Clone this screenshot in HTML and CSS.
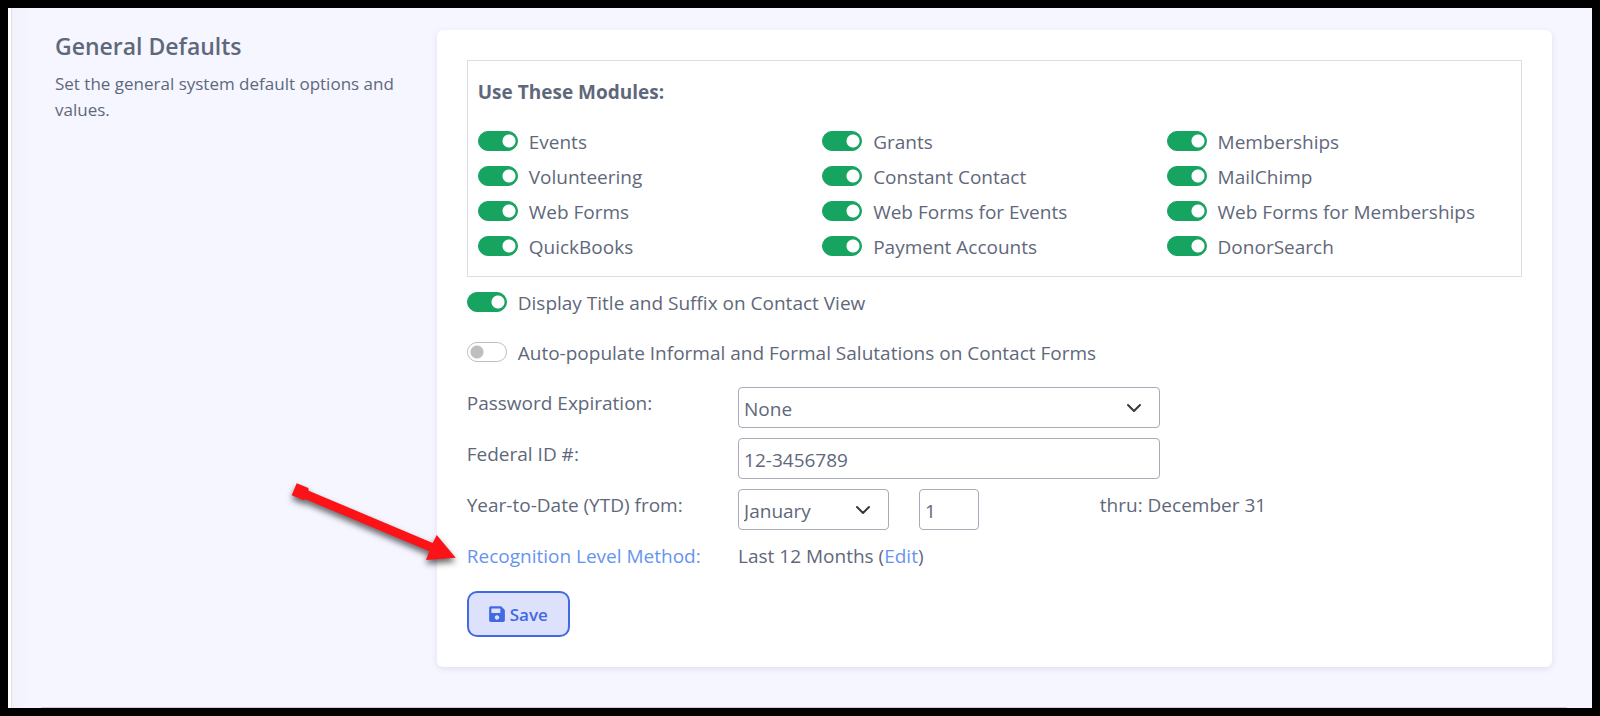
FILE: index.html
```html
<!DOCTYPE html>
<html lang="en">
<head>
  <meta charset="UTF-8">
  <meta name="viewport" content="width=device-width, initial-scale=1">
  <title>General Defaults</title>
  <link rel="stylesheet" href="styles.css">
</head>
<body>
  <main class="page">
    <div class="layout">
      <section class="intro">
        <h2>General Defaults</h2>
        <p>Set the general system default options and values.</p>
      </section>

      <form class="card">
        <fieldset class="modules">
          <h3 class="modules-title">Use These Modules:</h3>
          <div class="modules-grid">
            <label class="switch"><input type="checkbox" checked>Events</label>
            <label class="switch"><input type="checkbox" checked>Grants</label>
            <label class="switch"><input type="checkbox" checked>Memberships</label>
            <label class="switch"><input type="checkbox" checked>Volunteering</label>
            <label class="switch"><input type="checkbox" checked>Constant Contact</label>
            <label class="switch"><input type="checkbox" checked>MailChimp</label>
            <label class="switch"><input type="checkbox" checked>Web Forms</label>
            <label class="switch"><input type="checkbox" checked>Web Forms for Events</label>
            <label class="switch"><input type="checkbox" checked>Web Forms for Memberships</label>
            <label class="switch"><input type="checkbox" checked>QuickBooks</label>
            <label class="switch"><input type="checkbox" checked>Payment Accounts</label>
            <label class="switch"><input type="checkbox" checked>DonorSearch</label>
          </div>
        </fieldset>

        <div class="options">
          <label class="switch"><input type="checkbox" checked>Display Title and Suffix on Contact View</label>
          <label class="switch"><input type="checkbox">Auto-populate Informal and Formal Salutations on Contact Forms</label>
        </div>

        <div class="fields">
          <div class="row">
            <label class="row-label" for="expiration">Password Expiration:</label>
            <select class="control wide" id="expiration">
              <option>None</option>
            </select>
          </div>
          <div class="row">
            <label class="row-label" for="federal">Federal ID #:</label>
            <input class="control wide" type="text" id="federal" value="12-3456789">
          </div>
          <div class="row">
            <label class="row-label" for="month">Year-to-Date (YTD) from:</label>
            <select class="control month" id="month">
              <option>January</option>
            </select>
            <input class="control day" type="text" value="1" aria-label="Day">
            <span class="thru">thru: December 31</span>
          </div>
          <div class="row">
            <a class="row-label" href="#">Recognition Level Method:</a>
            <span class="wide row-text">Last 12 Months (<a href="#">Edit</a>)</span>
          </div>
        </div>

        <button class="save" type="button">
          <svg viewBox="0 0 448 512" aria-hidden="true"><path d="M433.9 129.9l-83.8-83.8A48 48 0 0 0 316.1 32H48C21.5 32 0 53.5 0 80v352c0 26.5 21.5 48 48 48h352c26.5 0 48-21.5 48-48V163.900a48 48 0 0 0-14.100-34zM224 416c-35.300 0-64-28.700-64-64s28.700-64 64-64 64 28.700 64 64-28.700 64-64 64zm96-304.500V212c0 6.600-5.400 12-12 12H76c-6.600 0-12-5.400-12-12V108c0-6.600 5.400-12 12-12h228.500c3.200 0 6.200 1.300 8.500 3.500l3.500 3.500a12 12 0 0 1 3.500 8.500z"/></svg>
          Save
        </button>
      </form>
    </div>

    <!-- pointer to the recognition level link -->
    <svg class="arrow" viewBox="0 0 180 100" aria-hidden="true">
      <path d="M10.7 7.3L22.3 12L22.7 14.7L146.7 67L150.7 59L169.7 81.7L140 84L143.3 75.3L19 23L18 24.3L5.7 19.3Z"/>
    </svg>
  </main>
</body>
</html>
```
FILE: styles.css
```css
* {
  box-sizing: border-box;
}
body {
  margin: 0;
  padding: 8px;
  background: #000;
  color: #5f687b;
  font-family: "Segoe UI", "Open Sans", sans-serif;
  font-size: 19px;
  line-height: 30px;
}
a {
  color: #6794ee;
  text-decoration: none;
}
.page {
  position: relative;
  min-height: calc(100vh - 16px);
  padding: 22px 40px 40px 44px;
  border-left: 3px solid #fff;
  background: linear-gradient(to right, #e0e0e8 1px, #f1f1fa 1px, #f5f6ff 18px);
}
/* rule along the bottom edge */
.page::after {
  content: "";
  position: absolute;
  left: 30px;
  right: 25px;
  bottom: 0;
  height: 1px;
  background: #cdced9;
}
.layout {
  display: grid;
  grid-template-columns: repeat(12, minmax(0, 1fr));
  column-gap: 30px;
  align-items: start;
}
.intro {
  grid-column: span 3;
}
.intro h2 {
  margin: 0 0 9px;
  font-size: 23px;
  font-weight: 600;
  line-height: 32px;
}
.intro p {
  margin: 0;
  font-size: 17px;
  line-height: 26px;
}
.card {
  grid-column: span 9;
  padding: 30px;
  border-radius: 6px;
  background: #fff;
  box-shadow: 0 2px 6px rgba(40, 40, 80, 0.1);
}

.modules {
  min-width: 0;
  margin: 0;
  padding: 16px 10px 14px;
  border: 1px solid #dcdee4;
}
.modules-title {
  margin: 0 0 20px;
  font-size: 19px;
  font-weight: 700;
}
.modules-grid {
  display: grid;
  grid-template-columns: repeat(3, 1fr);
  row-gap: 5px;
}
.switch {
  display: flex;
  align-items: center;
  gap: 11px;
}
.switch input {
  appearance: none;
  flex: none;
  width: 40px;
  height: 20px;
  margin: 0 0 2px;
  border: 1px solid #bfbfbf;
  border-radius: 10px;
  background: radial-gradient(circle at 9px 9px, #bfbfbf 6px, transparent 7px) #fff;
}
.switch input:checked {
  border-color: #17a461;
  background: radial-gradient(circle at 30px 9px, #fff 6px, transparent 7px) #17a461;
}
.options {
  display: grid;
  gap: 20px;
  margin: 11px 0 19px;
}

.fields {
  display: grid;
  gap: 10px;
}
.row {
  display: grid;
  grid-template-columns: repeat(12, minmax(0, 1fr));
  column-gap: 30px;
  align-items: start;
}
.row-label {
  grid-column: span 3;
  padding-top: 1px;
  white-space: nowrap;
}
.row-text {
  padding-top: 1px;
}
.wide {
  grid-column: span 5;
}
.month {
  grid-column: span 2;
}
.day {
  grid-column: span 1;
}
.thru {
  grid-column: 8 / span 4;
  padding-top: 1px;
}
.control {
  width: 100%;
  height: 41px;
  padding: 2px 5px 0;
  border: 1px solid #a9abb8;
  border-radius: 4px;
  background-color: #fff;
  color: inherit;
  font: inherit;
}
select.control {
  appearance: none;
  background-image: url("data:image/svg+xml,%3Csvg xmlns='http://www.w3.org/2000/svg' viewBox='0 0 16 16'%3E%3Cpath fill='none' stroke='%23343a40' stroke-width='2' stroke-linecap='round' stroke-linejoin='round' d='M2 5l6 6 6-6'/%3E%3C/svg%3E");
  background-repeat: no-repeat;
  background-position: right 17px center;
  background-size: 16px 16px;
}

.save {
  display: flex;
  align-items: center;
  gap: 5px;
  height: 46px;
  margin-top: 20px;
  padding: 0 20px;
  border: 2px solid #4169e1;
  border-radius: 10px;
  background: #dde1fc;
  color: #4169e1;
  font-family: inherit;
  font-size: 17px;
  font-weight: 600;
}
.save svg {
  width: 16px;
  height: 18px;
  fill: currentColor;
}

.arrow {
  position: absolute;
  left: 275px;
  top: 468px;
  width: 180px;
  height: 100px;
  overflow: visible;
  fill: #fb1318;
  filter: drop-shadow(0 4px 3px rgba(0, 0, 0, 0.6));
  pointer-events: none;
}
```
